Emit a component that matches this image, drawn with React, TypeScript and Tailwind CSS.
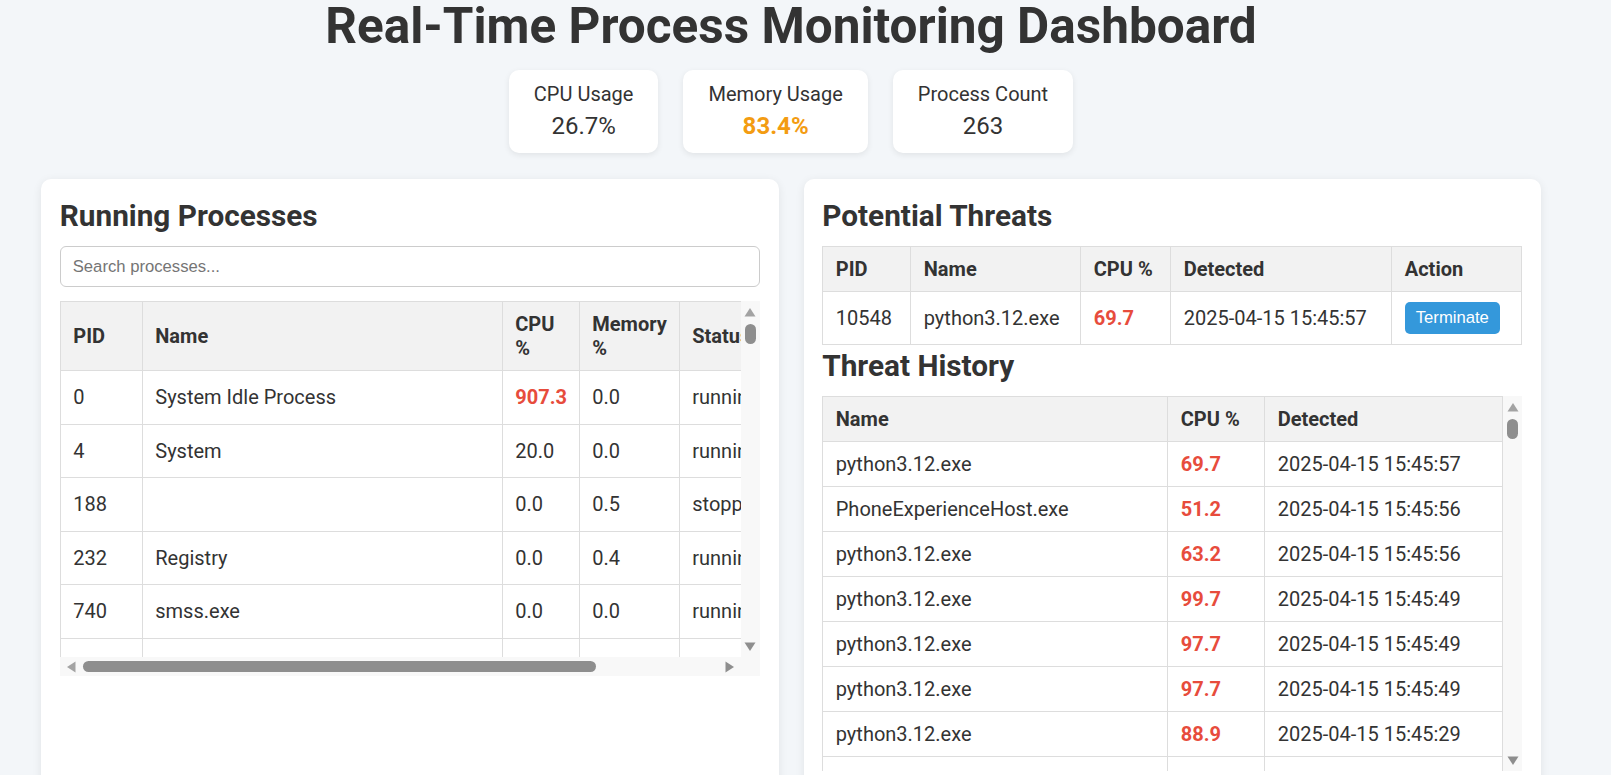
import React from "react";

type Proc = { pid: number; name: string; cpu: number; mem: number; status: string };

const processes: Proc[] = [
  { pid: 0, name: "System Idle Process", cpu: 907.3, mem: 0.0, status: "running" },
  { pid: 4, name: "System", cpu: 20.0, mem: 0.0, status: "running" },
  { pid: 188, name: "", cpu: 0.0, mem: 0.5, status: "stopped" },
  { pid: 232, name: "Registry", cpu: 0.0, mem: 0.4, status: "running" },
  { pid: 740, name: "smss.exe", cpu: 0.0, mem: 0.0, status: "running" },
  { pid: 1012, name: "csrss.exe", cpu: 0.0, mem: 0.1, status: "running" },
];

const history = [
  { name: "python3.12.exe", cpu: 69.7, at: "2025-04-15 15:45:57" },
  { name: "PhoneExperienceHost.exe", cpu: 51.2, at: "2025-04-15 15:45:56" },
  { name: "python3.12.exe", cpu: 63.2, at: "2025-04-15 15:45:56" },
  { name: "python3.12.exe", cpu: 99.7, at: "2025-04-15 15:45:49" },
  { name: "python3.12.exe", cpu: 97.7, at: "2025-04-15 15:45:49" },
  { name: "python3.12.exe", cpu: 97.7, at: "2025-04-15 15:45:49" },
  { name: "python3.12.exe", cpu: 88.9, at: "2025-04-15 15:45:29" },
  { name: "python3.12.exe", cpu: 92.4, at: "2025-04-15 15:45:21" },
];

// cpu above this shows red
const HIGH_CPU = 50;

const th = "border border-[#ddd] bg-[#f2f2f2] px-[12.5px] py-[10px] text-left font-bold";
const td = "border border-[#ddd] px-[12.5px] py-[10px]";
const tdTall = "border border-[#ddd] px-[12.5px] py-[14.25px]";

const TerminateButton = () => (
  <button className="h-[32px] rounded-[5px] bg-[#3498db] px-[11px] font-['Liberation_Sans',Arial,sans-serif] text-[16.67px] text-white">
    Terminate
  </button>
);

const Cpu = ({ value }: { value: number }) => (
  <span className={value > HIGH_CPU ? "font-bold text-[#e74c3c]" : ""}>{value.toFixed(1)}</span>
);

// scrollbars drawn to look like the browser's, table underneath is clipped
const VScrollbar = () => (
  <div className="flex w-[19px] shrink-0 flex-col items-center bg-[#f8f8f8]">
    <svg width="12" height="10" viewBox="0 0 12 10" className="mt-[6px]">
      <path d="M6 1 L11.5 9.5 L0.5 9.5 Z" fill="#a3a3a3" />
    </svg>
    <div className="mt-[7px] h-[20px] w-[11px] rounded-full bg-[#8e8e8e]" />
    <div className="flex-1" />
    <svg width="12" height="10" viewBox="0 0 12 10" className="mb-[5px]">
      <path d="M0.5 0.5 L11.5 0.5 L6 9 Z" fill="#8e8e8e" />
    </svg>
  </div>
);

const HScrollbar = () => (
  <div className="flex h-[19px] flex-1 items-center bg-[#f8f8f8]">
    <svg width="10" height="12" viewBox="0 0 10 12" className="ml-[6px]">
      <path d="M1 6 L9.5 0.5 L9.5 11.5 Z" fill="#a3a3a3" />
    </svg>
    <div className="ml-[7px] h-[11px] w-[513px] rounded-full bg-[#8e8e8e]" />
    <div className="flex-1" />
    <svg width="10" height="12" viewBox="0 0 10 12" className="mr-[6px]">
      <path d="M0.5 0.5 L9 6 L0.5 11.5 Z" fill="#8e8e8e" />
    </svg>
  </div>
);

const StatCard = ({ label, value, warn }: { label: string; value: string; warn?: boolean }) => (
  <div className="rounded-[10px] bg-white px-[25px] py-[12.5px] text-center shadow-[0_2px_6px_rgba(0,0,0,0.08)]">
    <p className="text-[20px] leading-[23.4px]">{label}</p>
    <p className={"mt-[6.5px] text-[24px] leading-[28px] " + (warn ? "font-bold text-[#f39c12]" : "")}>{value}</p>
  </div>
);

export default function App() {
  return (
    <div className="min-h-screen overflow-hidden bg-[#f3f6f9] font-['Roboto',sans-serif] text-[#333]">
      <div className="ml-[41px] w-[1500px] pt-[1px]">
        <h1 className="text-center text-[49.5px] font-bold leading-[50px]">Real-Time Process Monitoring Dashboard</h1>

        <div className="mt-[19px] flex justify-center gap-[25px]">
          <StatCard label="CPU Usage" value="26.7%" />
          <StatCard label="Memory Usage" value="83.4%" warn />
          <StatCard label="Process Count" value="263" />
        </div>

        <div className="mt-[26px] grid grid-cols-2 gap-[25px]">
          {/* Running processes */}
          <section className="rounded-[10px] bg-white p-[18.75px] pb-[120px] shadow-[0_2px_10px_rgba(0,0,0,0.08)]">
            <h2 className="mb-[13.5px] text-[29.75px] font-bold leading-[35px]">Running Processes</h2>
            <input
              type="text"
              placeholder="Search processes..."
              className="mb-[14px] h-[41px] w-full rounded-[6px] border border-[#ccc] px-[12px] font-['Liberation_Sans',Arial,sans-serif] text-[16.67px] outline-none placeholder:text-[#757575]"
            />
            <div className="flex h-[375px] flex-col">
              <div className="flex min-h-0 flex-1">
                <div className="min-w-0 flex-1 overflow-hidden">
                  <table className="w-[854px] table-fixed border-collapse text-[20px] leading-[24px]">
                    <thead>
                      <tr>
                        <th className={th + " w-[82px]"}>PID</th>
                        <th className={th + " w-[360px]"}>Name</th>
                        <th className={th + " w-[77px]"}>CPU %</th>
                        <th className={th + " w-[100px]"}>Memory %</th>
                        <th className={th}>Status</th>
                      </tr>
                    </thead>
                    <tbody>
                      {processes.map((p) => (
                        <tr key={p.pid}>
                          <td className={tdTall}>{p.pid}</td>
                          <td className={tdTall}>{p.name}</td>
                          <td className={tdTall}>
                            <Cpu value={p.cpu} />
                          </td>
                          <td className={tdTall}>{p.mem.toFixed(1)}</td>
                          <td className={tdTall}>{p.status}</td>
                        </tr>
                      ))}
                    </tbody>
                  </table>
                </div>
                <VScrollbar />
              </div>
              <div className="flex">
                <HScrollbar />
                <div className="h-[19px] w-[19px] bg-[#f8f8f8]" />
              </div>
            </div>
          </section>

          {/* Threats */}
          <section className="rounded-[10px] bg-white p-[18.75px] shadow-[0_2px_10px_rgba(0,0,0,0.08)]">
            <h2 className="mb-[13.5px] text-[29.75px] font-bold leading-[35px]">Potential Threats</h2>
            <table className="w-full table-fixed border-collapse text-[20px] leading-[24px]">
              <thead>
                <tr>
                  <th className={th + " w-[88px]"}>PID</th>
                  <th className={th + " w-[170px]"}>Name</th>
                  <th className={th + " w-[90px]"}>CPU %</th>
                  <th className={th + " w-[221px]"}>Detected</th>
                  <th className={th}>Action</th>
                </tr>
              </thead>
              <tbody>
                <tr>
                  <td className={td}>10548</td>
                  <td className={td}>python3.12.exe</td>
                  <td className={td}>
                    <Cpu value={69.7} />
                  </td>
                  <td className={td}>2025-04-15 15:45:57</td>
                  <td className={td}>
                    <TerminateButton />
                  </td>
                </tr>
              </tbody>
            </table>

            <h2 className="mb-[13px] mt-[2.5px] text-[29.75px] font-bold leading-[35px]">Threat History</h2>
            <div className="flex h-[375px]">
              <div className="min-w-0 flex-1 overflow-hidden">
                <table className="w-full table-fixed border-collapse text-[20px] leading-[24px]">
                  <thead>
                    <tr>
                      <th className={th + " w-[345px]"}>Name</th>
                      <th className={th + " w-[97px]"}>CPU %</th>
                      <th className={th}>Detected</th>
                    </tr>
                  </thead>
                  <tbody>
                    {history.map((h, i) => (
                      <tr key={i}>
                        <td className={td}>{h.name}</td>
                        <td className={td}>
                          <Cpu value={h.cpu} />
                        </td>
                        <td className={td}>{h.at}</td>
                      </tr>
                    ))}
                  </tbody>
                </table>
              </div>
              <VScrollbar />
            </div>
          </section>
        </div>
      </div>
    </div>
  );
}
